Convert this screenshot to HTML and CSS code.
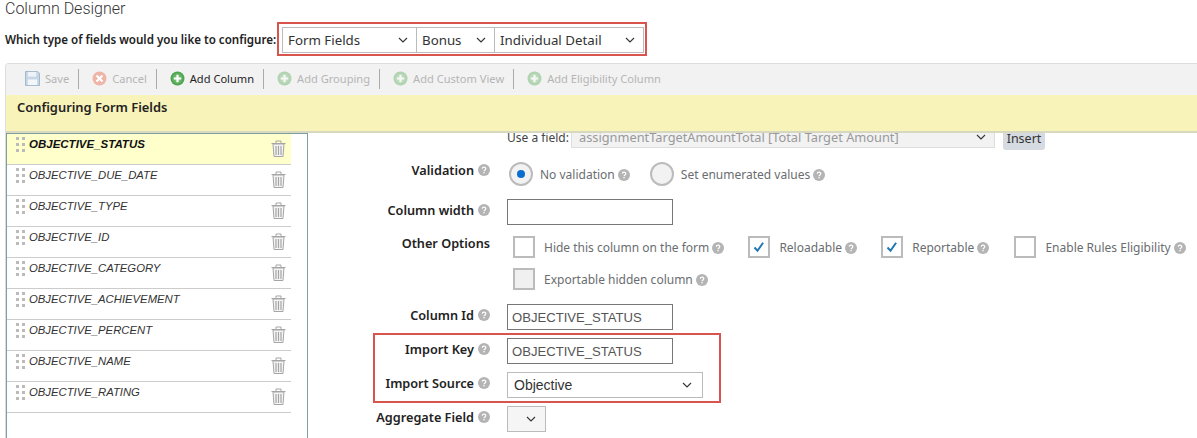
FILE: index.html
```html
<!DOCTYPE html>
<html>
<head>
    <title>Column Designer</title>
    <meta charset="utf-8">
    <link rel="stylesheet" href="styles.css">
</head>
<body>
    <svg class="sprites" width="0" height="0">
        <defs>
            <radialGradient id="leaf" cx="50%" cy="50%" r="55%">
                <stop offset="0%" stop-color="#8fd08f"/>
                <stop offset="100%" stop-color="#3f9a3f"/>
            </radialGradient>
        </defs>
        <symbol id="chev" viewBox="0 0 10 6"><path d="M1 1l4 4 4-4" fill="none" stroke="#333" stroke-width="1.1"/></symbol>
        <symbol id="help" viewBox="0 0 12 12"><circle cx="6" cy="6" r="6" fill="#b4b4b4"/><path d="M4.3 4.7c0-2.2 3.5-2.2 3.5-.1 0 1.3-1.7 1.3-1.7 2.6" fill="none" stroke="#fff" stroke-width="1.2"/><rect x="5.4" y="8" width="1.3" height="1.3" fill="#fff"/></symbol>
        <symbol id="plus" viewBox="0 0 14 14"><circle cx="7" cy="7" r="6.5" fill="url(#leaf)"/><path d="M7 3.5v7M3.5 7h7" stroke="#fff" stroke-width="2"/></symbol>
        <symbol id="grip" viewBox="0 0 9 15"><g fill="#bbb"><rect width="3" height="3"/><rect x="6" width="3" height="3"/><rect y="6" width="3" height="3"/><rect x="6" y="6" width="3" height="3"/><rect y="12" width="3" height="3"/><rect x="6" y="12" width="3" height="3"/></g></symbol>
        <symbol id="trash" viewBox="0 0 15 17"><path d="M.5 3.5h14M5 3V1h5v2" fill="none" stroke="#a5a5a5"/><path d="M2 4h11l-1 12.5H3z" fill="#f4f4f4" stroke="#a5a5a5"/><path d="M5 6v9M7.5 6v9M10 6v9" stroke="#a5a5a5" stroke-width="1.2"/></symbol>
    </svg>

    <h1 class="page-title">Column Designer</h1>

    <div class="type-row">
        <span class="type-label">Which type of fields would you like to configure:</span>
        <div class="select type-a">Form Fields <svg class="chev"><use href="#chev"/></svg></div>
        <div class="select type-b">Bonus <svg class="chev"><use href="#chev"/></svg></div>
        <div class="select type-c">Individual Detail <svg class="chev"><use href="#chev"/></svg></div>
        <div class="red-box type-box"></div>
    </div>

    <div class="card">
        <div class="toolbar">
            <span class="tool off"><svg class="save-icon" viewBox="0 0 16 16"><path d="M.5.5h13l2 2v13H.5z" fill="#c6d6e6" stroke="#9db4c9"/><rect x="3" y="1" width="9" height="5" fill="#eef3f8"/><rect x="3" y="9" width="10" height="6" fill="#f4f7fa"/></svg>Save</span>
            <span class="tool off"><svg class="tool-icon" viewBox="0 0 14 14"><circle cx="7" cy="7" r="6.5" fill="#eeb4a8"/><path d="M4.2 4.2l5.6 5.6M9.8 4.2l-5.6 5.6" stroke="#fff" stroke-width="2"/></svg>Cancel</span>
            <span class="tool on"><svg class="tool-icon"><use href="#plus"/></svg>Add Column</span>
            <span class="tool off"><svg class="tool-icon pale"><use href="#plus"/></svg>Add Grouping</span>
            <span class="tool off"><svg class="tool-icon pale"><use href="#plus"/></svg>Add Custom View</span>
            <span class="tool off last"><svg class="tool-icon pale"><use href="#plus"/></svg>Add Eligibility Column</span>
        </div>
        <div class="banner">Configuring Form Fields</div>

        <div class="designer">
            <ul class="col-list">
                <li class="col-item active"><svg class="grip"><use href="#grip"/></svg><span>OBJECTIVE_STATUS</span><svg class="trash"><use href="#trash"/></svg></li>
                <li class="col-item"><svg class="grip"><use href="#grip"/></svg><span>OBJECTIVE_DUE_DATE</span><svg class="trash"><use href="#trash"/></svg></li>
                <li class="col-item"><svg class="grip"><use href="#grip"/></svg><span>OBJECTIVE_TYPE</span><svg class="trash"><use href="#trash"/></svg></li>
                <li class="col-item"><svg class="grip"><use href="#grip"/></svg><span>OBJECTIVE_ID</span><svg class="trash"><use href="#trash"/></svg></li>
                <li class="col-item"><svg class="grip"><use href="#grip"/></svg><span>OBJECTIVE_CATEGORY</span><svg class="trash"><use href="#trash"/></svg></li>
                <li class="col-item"><svg class="grip"><use href="#grip"/></svg><span>OBJECTIVE_ACHIEVEMENT</span><svg class="trash"><use href="#trash"/></svg></li>
                <li class="col-item"><svg class="grip"><use href="#grip"/></svg><span>OBJECTIVE_PERCENT</span><svg class="trash"><use href="#trash"/></svg></li>
                <li class="col-item"><svg class="grip"><use href="#grip"/></svg><span>OBJECTIVE_NAME</span><svg class="trash"><use href="#trash"/></svg></li>
                <li class="col-item"><svg class="grip"><use href="#grip"/></svg><span>OBJECTIVE_RATING</span><svg class="trash"><use href="#trash"/></svg></li>
            </ul>

            <div class="form">
                <div class="use-field">
                    <span class="use-label">Use a field:</span>
                    <div class="select field-select">assignmentTargetAmountTotal [Total Target Amount] <svg class="chev"><use href="#chev"/></svg></div>
                    <button class="insert">Insert</button>
                </div>

                <div class="row validation">
                    <label class="row-label">Validation <svg class="help"><use href="#help"/></svg></label>
                    <div class="options">
                        <span class="radio checked"></span><span class="opt-text no-valid">No validation <svg class="help"><use href="#help"/></svg></span>
                        <span class="radio"></span><span class="opt-text">Set enumerated values <svg class="help"><use href="#help"/></svg></span>
                    </div>
                </div>

                <div class="row">
                    <label class="row-label">Column width <svg class="help"><use href="#help"/></svg></label>
                    <div class="input"></div>
                </div>

                <div class="row other">
                    <label class="row-label">Other Options</label>
                    <div class="checks">
                        <div class="check-line">
                            <span class="check"></span><span class="opt-text">Hide this column on the form <svg class="help"><use href="#help"/></svg></span>
                            <span class="check"><svg viewBox="0 0 18 18"><path d="M4.5 9.5l3 3.2 5.6-8" fill="none" stroke="#1f77b4" stroke-width="2"/></svg></span><span class="opt-text">Reloadable <svg class="help"><use href="#help"/></svg></span>
                            <span class="check"><svg viewBox="0 0 18 18"><path d="M4.5 9.5l3 3.2 5.6-8" fill="none" stroke="#1f77b4" stroke-width="2"/></svg></span><span class="opt-text report">Reportable <svg class="help"><use href="#help"/></svg></span>
                            <span class="check"></span><span class="opt-text">Enable Rules Eligibility <svg class="help"><use href="#help"/></svg></span>
                        </div>
                        <div class="check-line">
                            <span class="check disabled"></span><span class="opt-text">Exportable hidden column <svg class="help"><use href="#help"/></svg></span>
                        </div>
                    </div>
                </div>

                <div class="row">
                    <label class="row-label">Column Id <svg class="help"><use href="#help"/></svg></label>
                    <div class="input">OBJECTIVE_STATUS</div>
                </div>

                <div class="import-group">
                    <div class="red-box import-box"></div>
                    <div class="row">
                        <label class="row-label">Import Key <svg class="help"><use href="#help"/></svg></label>
                        <div class="input">OBJECTIVE_STATUS</div>
                    </div>
                    <div class="row">
                        <label class="row-label">Import Source <svg class="help"><use href="#help"/></svg></label>
                        <div class="select source-select">Objective <svg class="chev"><use href="#chev"/></svg></div>
                    </div>
                </div>

                <div class="row">
                    <label class="row-label">Aggregate Field <svg class="help"><use href="#help"/></svg></label>
                    <div class="select agg-select"><svg class="chev"><use href="#chev"/></svg></div>
                </div>
            </div>
        </div>
    </div>
</body>
</html>
```

FILE: styles.css
```css
* {
    margin: 0;
    padding: 0;
    box-sizing: border-box;
}

html, body {
    height: 438px;
    overflow: hidden;
}

body {
    background: #fff;
    color: #32363a;
    font-family: "Noto Sans", sans-serif;
    font-size: 12px;
    padding: 1px 0 0 5px;
}

.sprites {
    position: absolute;
}

.page-title {
    font-family: Roboto, sans-serif;
    font-size: 16px;
    font-weight: 300;
    line-height: 16px;
    color: #333;
}

.type-row {
    display: flex;
    align-items: center;
    position: relative;
    margin-top: 10px;
    height: 25px;
}

.type-label {
    width: 277px;
    font-size: 11.6px;
    font-weight: 600;
    color: #222;
    white-space: nowrap;
}

.select {
    display: flex;
    align-items: center;
    justify-content: space-between;
    height: 26px;
    padding: 0 8px 0 5px;
    border: 1px solid #bbb;
    background: #fff;
    color: #333;
    font-size: 13.3px;
    white-space: nowrap;
}

.chev {
    width: 10px;
    height: 6px;
    flex: none;
}

.type-a { width: 135px; }
.type-b { width: 79px; margin-left: -1px; }
.type-c { width: 150px; margin-left: -1px; }

.red-box {
    position: absolute;
    border: 2px solid #d9534f;
    pointer-events: none;
}

.type-box {
    left: 272px;
    top: -5px;
    width: 370px;
    height: 34px;
}

.card {
    margin-top: 11px;
    height: 376px;
    border: 1px solid #ddd;
    border-right: 0;
    border-radius: 4px 0 0 0;
    overflow: hidden;
}

.toolbar {
    display: flex;
    align-items: center;
    height: 31px;
    padding: 0 0 2px 19px;
    background: #f2f2f2;
}

.tool {
    display: flex;
    align-items: center;
    gap: 5px;
    height: 20px;
    padding-right: 9px;
    margin-right: 13px;
    border-right: 1px solid #aaa;
    font-size: 11.1px;
    white-space: nowrap;
}

.tool.last {
    border-right: 0;
}

.tool.off {
    color: #b5b5b5;
}

.tool.on {
    color: #222;
}

.save-icon, .tool-icon {
    width: 15px;
    height: 15px;
}

.pale {
    opacity: 0.4;
}

/* sits over the top of the scrolled form, which runs up underneath it */
.banner {
    position: relative;
    z-index: 1;
    height: 38px;
    padding: 3px 0 0 11px;
    background: #f8f3b9;
    border-bottom: 2px solid #d8d8c0;
    color: #222;
    font-size: 12.9px;
    font-weight: 600;
}

.designer {
    display: flex;
    height: 306px;
}

.col-list {
    list-style: none;
    flex: none;
    width: 302px;
    height: 100%;
    border: 1px solid #7f9f9f;
    border-bottom: 0;
}

.col-item {
    display: flex;
    align-items: flex-start;
    width: 284px;
    height: 31px;
    padding-top: 3px;
    border-bottom: 1px solid #ccc;
    font-family: "Liberation Sans", sans-serif;
    font-size: 11.3px;
    font-style: italic;
    color: #333;
}

.col-item.active {
    background: #ffffcc;
    color: #111;
    font-size: 11.5px;
    font-weight: bold;
}

.grip {
    width: 9px;
    height: 15px;
    margin: 0 4px 0 9px;
    flex: none;
}

.col-item span {
    flex: 1;
    line-height: 14px;
}

.trash {
    width: 15px;
    height: 17px;
    margin: 3px 5px 0 0;
    flex: none;
}

.form {
    flex: 1;
    min-width: 0;
}

.use-field {
    display: flex;
    align-items: flex-start;
    height: 36px;
    margin-left: 199px;
    margin-top: -11px;
}

.use-label {
    width: 64px;
    padding-top: 7px;
    font-size: 12px;
    white-space: nowrap;
    color: #444;
}

.field-select {
    width: 424px;
    padding: 3px 8px 0 7px;
    background: #f2f2f2;
    border-color: #ddd;
    color: #999;
    font-size: 12.8px;
}

.insert {
    width: 42px;
    height: 24px;
    margin: 4px 0 0 8px;
    background: #d5dbe0;
    border: 0;
    border-radius: 0 0 3px 3px;
    font: 12.5px "Noto Sans", sans-serif;
    color: #333;
}

.row {
    display: flex;
    align-items: center;
    height: 26px;
    margin-bottom: 8px;
}

.row-label {
    flex: none;
    width: 182px;
    margin-right: 17px;
    display: flex;
    align-items: center;
    justify-content: flex-end;
    gap: 4px;
    font-size: 12.7px;
    font-weight: 600;
    color: #222;
    white-space: nowrap;
    transform: translateY(-2px);
}

.help {
    width: 12px;
    height: 12px;
    flex: none;
    vertical-align: -2px;
}

.validation {
    margin-top: 4px;
    height: 24px;
    margin-bottom: 13px;
}

.validation .row-label {
    transform: translateY(-4px);
}

.options {
    display: flex;
    align-items: center;
    margin-left: 2px;
}

.radio {
    width: 24px;
    height: 24px;
    border: 2px solid #bbb;
    border-radius: 50%;
    background: #f2f2f2;
    margin-right: 7px;
    flex: none;
    position: relative;
}

.radio.checked::after {
    content: '';
    position: absolute;
    left: 6px;
    top: 6px;
    width: 8px;
    height: 8px;
    border-radius: 50%;
    background: #0a6ed1;
}

.opt-text {
    color: #6a6d70;
    font-size: 12px;
    white-space: nowrap;
    margin-right: 24px;
}

.opt-text.no-valid {
    margin-right: 20px;
}

.opt-text.report {
    margin-right: 25px;
}

.input {
    width: 166px;
    height: 26px;
    padding: 0 4px;
    border: 1px solid #777;
    display: flex;
    align-items: center;
    font-family: "Liberation Sans", sans-serif;
    font-size: 13.1px;
    color: #555;
}

.other {
    height: 54px;
    align-items: flex-start;
    margin-top: 11px;
    margin-bottom: 14px;
}

.checks {
    margin-left: 6px;
    display: flex;
    flex-direction: column;
    gap: 10px;
}

.check-line {
    display: flex;
    align-items: center;
}

.check {
    width: 22px;
    height: 22px;
    border: 2px solid #bbb;
    background: #fff;
    margin-right: 9px;
    flex: none;
}

.check svg {
    display: block;
    width: 18px;
    height: 18px;
}

.check.disabled {
    background: #f0f0f0;
}

.import-group {
    position: relative;
}

.import-box {
    left: 65px;
    top: -5px;
    width: 348px;
    height: 70px;
}

.source-select {
    width: 196px;
    padding: 0 10px 0 6px;
    font-family: "Liberation Sans", sans-serif;
    font-size: 14px;
}

.agg-select {
    width: 39px;
    background: #f5f5f5;
    justify-content: flex-end;
    padding-right: 9px;
}
```
